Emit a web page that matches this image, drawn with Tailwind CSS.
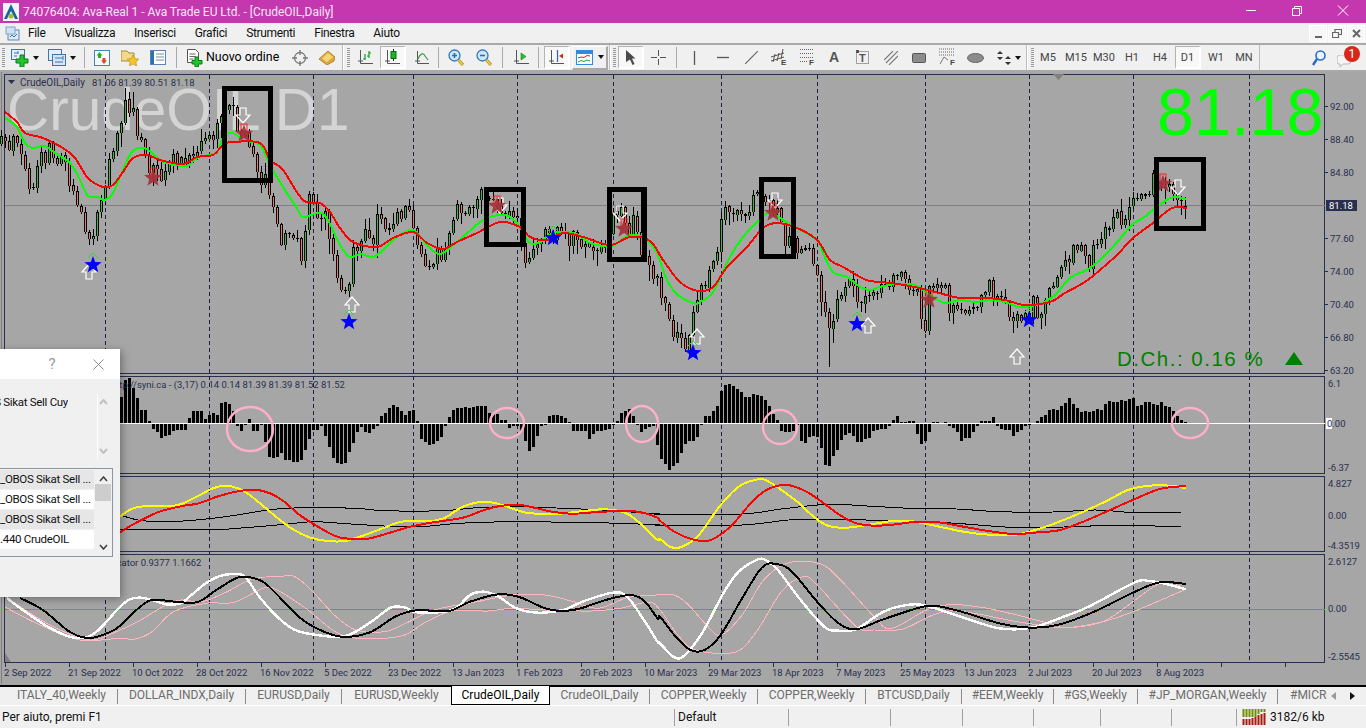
<!DOCTYPE html>
<html lang="it">
<head>
<meta charset="utf-8">
<title>CrudeOIL,Daily</title>
<script src="https://cdn.jsdelivr.net/npm/@tailwindcss/browser@4"></script>
</head>
<body class="w-[1366px] h-[728px] overflow-hidden relative bg-[#f0f0f0] text-[12px] text-black [font-family:Roboto,sans-serif]">
<!-- title bar -->
<div class="h-[23px] bg-[#c437ae] flex items-center text-white">
  <svg class="ml-[3px] shrink-0" width="16" height="18" viewBox="0 0 16 18"><rect width="16" height="18" fill="#eef4f8"/><path d="M8 1L15 16H1z" fill="#1f5f9c"/><path d="M8 8l4 8H4z" fill="#fff"/><circle cx="8" cy="13" r="2.6" fill="#8fc43c"/></svg>
  <span class="ml-[4px] text-[12px] tracking-[-0.03px] text-[#f8e6f4]">74076404: Ava-Real 1 - Ava Trade EU Ltd. - [CrudeOIL,Daily]</span>
  <div class="ml-auto flex items-center">
    <svg width="46" height="23" viewBox="0 0 46 23"><path d="M18 10.5h10" stroke="#fff"/></svg>
    <svg width="46" height="23" viewBox="0 0 46 23"><path d="M18.5 8.5h7v7h-7zM20.5 8.5v-2h7v7h-2" fill="none" stroke="#fff"/></svg>
    <svg width="46" height="23" viewBox="0 0 46 23"><path d="M18 5.5l10 10M28 5.5l-10 10" stroke="#fff"/></svg>
  </div>
</div>
<!-- menu bar -->
<div class="h-[20px] flex items-center relative text-[12px] tracking-[-0.35px] text-[#111]">
  <svg class="ml-[5px] shrink-0" width="15" height="15" viewBox="0 0 15 15"><rect x="3" y="4" width="11" height="10" fill="#dfeaf6" stroke="#5b86b8"/><rect x="1" y="1" width="9" height="7" fill="#cfe0f2" stroke="#7fa3cc"/><path d="M5 11l2-2 2 2 3-3" fill="none" stroke="#3a6ea8"/></svg>
  <div class="ml-[8px] flex gap-[19px]">
    <span>File</span><span>Visualizza</span><span>Inserisci</span><span>Grafici</span><span>Strumenti</span><span>Finestra</span><span>Aiuto</span>
  </div>
  <div class="ml-auto mr-[1px] flex gap-[1px]">
    <div class="w-[18px] h-[17px] bg-[#f7f7f7] border border-white flex items-end justify-center pb-[3px]"><div class="w-[7px] h-[2px] bg-[#666]"></div></div>
    <div class="w-[18px] h-[17px] bg-[#f7f7f7] border border-white flex items-center justify-center"><svg width="10" height="9" viewBox="0 0 10 9"><path d="M.5 3.5h6v5h-6zM3 3V.5h6.5v5H7" fill="none" stroke="#666" stroke-width="1.2"/></svg></div>
    <div class="w-[18px] h-[17px] bg-[#f7f7f7] border border-white flex items-center justify-center"><svg width="9" height="9" viewBox="0 0 9 9"><path d="M1 1l7 7M8 1l-7 7" stroke="#666" stroke-width="2"/></svg></div>
  </div>
</div>
<!-- toolbar -->
<div class="h-[29px] border-y-2 border-[#a9a9a9] flex items-center">
  <div class="ml-[2px] w-[3px] h-[20px] shrink-0 bg-[repeating-linear-gradient(#999_0_1px,transparent_1px_2px)]"></div>
  <svg class="ml-[6px] shrink-0" width="18" height="18" viewBox="0 0 18 18"><rect x=".5" y=".5" width="13" height="10" fill="#e6eff9" stroke="#3f74ae"/><path d="M3 4h4M3 7h3M7 2v3" stroke="#3f74ae"/><path d="M9 6h4v4h4v4h-4v4H9v-4H5v-4h4z" fill="#24c430" stroke="#0a7a14"/></svg>
  <svg class="ml-[4px] shrink-0" width="6" height="4" viewBox="0 0 6 4"><path d="M0 0h6L3 4z" fill="#111"/></svg>
  <svg class="ml-[9px] shrink-0" width="18" height="18" viewBox="0 0 18 18"><rect x=".5" y=".5" width="13" height="11" fill="#e6eff9" stroke="#3f74ae"/><rect x="4.5" y="5.5" width="13" height="11" fill="#d5e5f6" stroke="#3f74ae"/><path d="M7 9h8M7 13h8M15 7v4" stroke="#3f74ae"/></svg>
  <svg class="ml-[4px] shrink-0" width="6" height="4" viewBox="0 0 6 4"><path d="M0 0h6L3 4z" fill="#111"/></svg>
  <div class="ml-[8px] w-px h-[21px] shrink-0 bg-[#a9a9a9]"></div>
  <svg class="ml-[9px] shrink-0" width="16" height="16" viewBox="0 0 16 16"><rect x=".5" y=".5" width="15" height="15" fill="#f6f9fd" stroke="#4d7fb5"/><path d="M5.500 2l3 3.500H7V8H4V5.500H2.500z" fill="#1fb52b"/><path d="M10 14l-3-3.500h1.500V8h3v2.500H13z" fill="#e0442a"/></svg>
  <svg class="ml-[11px] shrink-0" width="18" height="16" viewBox="0 0 18 16"><path d="M0 1h6l2 2h5v8H0z" fill="#f2d98a" stroke="#a08a40"/><path d="M12 5l1.800 3.600 4 .5-2.900 2.800.7 4L12 14l-3.600 1.900.7-4-2.900-2.800 4-.5z" fill="#f3c628" stroke="#b08a1a" stroke-width=".6"/></svg>
  <svg class="ml-[11px] shrink-0" width="16" height="15" viewBox="0 0 16 15"><rect x=".5" y=".5" width="15" height="14" fill="#fff" stroke="#5584b8"/><rect x="1" y="1" width="3" height="13" fill="#2f6fb0"/><path d="M6 4h8M6 7h8M6 10h8" stroke="#6f8aa8"/></svg>
  <div class="ml-[10px] w-px h-[21px] shrink-0 bg-[#a9a9a9]"></div>
  <svg class="ml-[10px] shrink-0" width="17" height="18" viewBox="0 0 17 18"><path d="M.5.500h8l3 3v10H.5z" fill="#fff" stroke="#555"/><path d="M2.500 5h6M2.500 7.500h6M2.500 10h4" stroke="#666"/><path d="M8 8h3.500v3.500H15V15h-3.500v3H8v-3H5v-3.500h3z" fill="#24c430" stroke="#0a7a14"/></svg>
  <span class="ml-[2px] w-[73px] shrink-0 text-[12.4px] whitespace-nowrap">Nuovo ordine</span>
  <svg class="ml-[13px] shrink-0" width="16" height="16" viewBox="0 0 16 16"><circle cx="8" cy="8" r="5.500" fill="none" stroke="#777" stroke-width="1.300"/><path d="M8 0v5M8 11v5M0 8h5M11 8h5" stroke="#777" stroke-width="1.300"/></svg>
  <svg class="ml-[11px] shrink-0" width="16" height="14" viewBox="0 0 16 14"><path d="M0 8l9-8 7 6-1 4-7 4z" fill="#e0a63c" stroke="#9a6c18" stroke-width=".7"/><path d="M3 7.500l6-5.500 5 4-6 5z" fill="#f5d676"/></svg>
  <div class="ml-[7px] w-[2px] h-[25px] shrink-0 bg-[#bdbdbd] border-r border-white"></div>
  <div class="ml-[3px] w-[3px] h-[20px] shrink-0 bg-[repeating-linear-gradient(#999_0_1px,transparent_1px_2px)]"></div>
  <svg class="ml-[8px] shrink-0" width="15" height="15" viewBox="0 0 15 15"><path d="M2.500 0v13.500H15M0 11h5" fill="none" stroke="#555"/><path d="M7 10V4M5 9h2M11 8V1M11 3h2M11 6H9" stroke="#0f9a1c" stroke-width="1.200" fill="none"/></svg>
  <div class="ml-[7px] w-[26px] h-[23px] shrink-0 bg-[#f8f8f8] border border-[#b4b4b4] border-r-2 border-b-2 border-r-white border-b-white flex items-center justify-center"><svg width="15" height="16" viewBox="0 0 15 16"><path d="M2.500 1v13.500H15M0 12h5" fill="none" stroke="#555"/><path d="M8.500 0v12" stroke="#222"/><rect x="6" y="2.500" width="5" height="7" fill="#1fb52b" stroke="#0a6a14"/></svg></div>
  <svg class="ml-[9px] shrink-0" width="14" height="15" viewBox="0 0 14 15"><path d="M2.500 1v12.500H14M0 11h5" fill="none" stroke="#555"/><path d="M3 9c2-5 5-7 7-3l3 4" fill="none" stroke="#3f9a45" stroke-width="1.200"/></svg>
  <div class="ml-[9px] w-px h-[21px] shrink-0 bg-[#a9a9a9]"></div>
  <svg class="ml-[9px] shrink-0" width="16" height="17" viewBox="0 0 16 17"><circle cx="6.500" cy="6.500" r="5.500" fill="#cfe6fa" stroke="#2f78c0" stroke-width="1.300"/><path d="M4 6.500h5M6.500 4v5" stroke="#2f6fb0" stroke-width="1.600"/><path d="M10.500 11l4.500 5" stroke="#b08a1a" stroke-width="3"/><path d="M10.500 11l4.500 5" stroke="#f3d14a" stroke-width="1.500"/></svg>
  <svg class="ml-[12px] shrink-0" width="16" height="17" viewBox="0 0 16 17"><circle cx="6.500" cy="6.500" r="5.500" fill="#cfe6fa" stroke="#2f78c0" stroke-width="1.300"/><path d="M4 6.500h5" stroke="#2f6fb0" stroke-width="1.600"/><path d="M10.500 11l4.500 5" stroke="#b08a1a" stroke-width="3"/><path d="M10.500 11l4.500 5" stroke="#f3d14a" stroke-width="1.500"/></svg>
  <div class="ml-[10px] w-px h-[21px] shrink-0 bg-[#a9a9a9]"></div>
  <svg class="ml-[11px] shrink-0" width="15" height="15" viewBox="0 0 15 15"><path d="M2.500 0v13.500H15M0 11h5" fill="none" stroke="#555"/><path d="M7 3l5 3.500L7 10z" fill="#28c232" stroke="#0a7a14" stroke-width=".6"/></svg>
  <div class="ml-[9px] w-px h-[21px] shrink-0 bg-[#a9a9a9]"></div>
  <div class="ml-[5px] w-[26px] h-[23px] shrink-0 bg-[#f8f8f8] border border-[#b4b4b4] border-r-2 border-b-2 border-r-white border-b-white flex items-center justify-center"><svg width="15" height="16" viewBox="0 0 15 16"><path d="M2.500 1v13.500H15M0 12h5" fill="none" stroke="#555"/><path d="M8.500 1v12" stroke="#2f6fb0" stroke-width="1.300"/><path d="M10 7l4-2.500v5z" fill="#c03018"/></svg></div>
  <div class="ml-[2px] w-[36px] h-[24px] shrink-0 border border-white border-r-[#a9a9a9] border-b-[#a9a9a9] border-r-2 border-b-2 flex items-center pl-[3px]"><svg width="17" height="15" viewBox="0 0 17 15"><rect x=".5" y=".5" width="16" height="14" fill="#fff" stroke="#2f8ae0"/><rect x="1" y="1" width="15" height="3" fill="#2f8ae0"/><path d="M2 8l3-1 3 .5 3-2 3 .5" fill="none" stroke="#c03018"/><path d="M2 12l3-1.500 3 1 3-1.500 3 1" fill="none" stroke="#1fa52b"/></svg><svg class="ml-[5px]" width="6" height="4" viewBox="0 0 6 4"><path d="M0 0h6L3 4z" fill="#111"/></svg></div>
  <div class="ml-px w-[2px] h-[25px] shrink-0 bg-[#bdbdbd] border-r border-white"></div>
  <div class="ml-[2px] w-[3px] h-[20px] shrink-0 bg-[repeating-linear-gradient(#999_0_1px,transparent_1px_2px)]"></div>
  <div class="ml-[2px] w-[26px] h-[23px] shrink-0 bg-[#f8f8f8] border border-[#b4b4b4] border-r-2 border-b-2 border-r-white border-b-white flex items-center justify-center"><svg width="10" height="15" viewBox="0 0 10 15"><path d="M0 0l9.500 8.500H6l2.500 5.500-2 1-2.500-5.500L0 12z" fill="#4a4a4a"/></svg></div>
  <svg class="ml-[7px] shrink-0" width="15" height="15" viewBox="0 0 15 15"><path d="M7.500 0v6M7.500 9v6M0 7.500h6M9 7.500h6" stroke="#555"/></svg>
  <div class="ml-[10px] w-px h-[21px] shrink-0 bg-[#a9a9a9]"></div>
  <svg class="ml-[12px] shrink-0" width="10" height="14" viewBox="0 0 10 14"><path d="M5.500 0v14" stroke="#555" stroke-width="1.300"/></svg>
  <svg class="ml-[18px] shrink-0" width="12" height="3" viewBox="0 0 12 3"><path d="M0 1.500h12" stroke="#555" stroke-width="1.300"/></svg>
  <svg class="ml-[16px] shrink-0" width="13" height="13" viewBox="0 0 13 13"><path d="M0 13L13 0" stroke="#666" stroke-width="1.200"/></svg>
  <svg class="ml-[13px] shrink-0" width="16" height="20" viewBox="0 0 16 20"><path d="M0 9l13-4M0 13l13-4M2 14l2-8M6 13l2-8M10 11l2-10" stroke="#555" fill="none"/><text x="10" y="17" font-size="8" font-weight="700" fill="#444" font-family="Liberation Sans">E</text></svg>
  <svg class="ml-[13px] shrink-0" width="14" height="20" viewBox="0 0 14 20"><path d="M0 1.500h13M0 5.500h13M0 9.500h13M0 13.500h8" stroke="#666" stroke-dasharray="1 1" fill="none"/><text x="9" y="17" font-size="8" font-weight="700" fill="#444" font-family="Liberation Sans">F</text></svg>
  <span class="ml-[14px] w-[12px] shrink-0 text-center text-[14px] font-bold text-[#555] [font-family:'Liberation_Sans',sans-serif]">A</span>
  <svg class="ml-[16px] shrink-0" width="13" height="16" viewBox="0 0 13 16"><rect x=".5" y="1.500" width="12" height="12" fill="none" stroke="#555" stroke-dasharray="1 1"/><rect width="3" height="3" fill="#555"/><text x="3" y="12" font-size="11" font-weight="700" fill="#555" font-family="Liberation Sans">T</text></svg>
  <svg class="ml-[15px] shrink-0" width="14" height="14" viewBox="0 0 14 14"><path d="M0 9l9-9M2 12L14 0M5 14L14 5" stroke="#777" stroke-width="1.100"/></svg>
  <svg class="ml-[14px] shrink-0" width="14" height="10" viewBox="0 0 14 10"><rect x=".5" y=".5" width="13" height="9" rx="1" fill="#8c8c8c" stroke="#555"/></svg>
  <svg class="ml-[13px] shrink-0" width="16" height="20" viewBox="0 0 16 20"><path d="M0 1h16M0 4h16M0 7h16" stroke="#666" stroke-dasharray="1 1"/><path d="M1 16l4-7 4 3" fill="none" stroke="#777"/><text x="11" y="17" font-size="8" font-weight="700" fill="#444" font-family="Liberation Sans">F</text></svg>
  <svg class="ml-[12px] shrink-0" width="17" height="10" viewBox="0 0 17 10"><ellipse cx="8.500" cy="5" rx="8" ry="4.500" fill="#8c8c8c" stroke="#666"/></svg>
  <svg class="ml-[12px] shrink-0" width="16" height="14" viewBox="0 0 16 14"><path d="M4 0l3 3H1zM1 6h6L4 9zM3 9l6-5M12 14l-3-3h6zM15 8H9l3-3z" fill="#333"/></svg>
  <svg class="ml-[3px] shrink-0" width="6" height="4" viewBox="0 0 6 4"><path d="M0 0h6L3 4z" fill="#111"/></svg>
  <div class="ml-[5px] w-[2px] h-[25px] shrink-0 bg-[#bdbdbd] border-r border-white"></div>
  <div class="ml-[3px] w-[3px] h-[20px] shrink-0 bg-[repeating-linear-gradient(#999_0_1px,transparent_1px_2px)]"></div>
  <div class="flex text-[11px] text-[#444] text-center leading-[23px]">
    <span class="w-[28px]">M5</span><span class="w-[28px]">M15</span><span class="w-[28px]">M30</span><span class="w-[28px]">H1</span><span class="w-[28px]">H4</span>
    <span class="w-[26px] mx-px h-[23px] bg-[#f8f8f8] border border-[#b4b4b4] border-r-2 border-b-2 border-r-white border-b-white leading-[21px]">D1</span>
    <span class="w-[28px]">W1</span><span class="w-[28px]">MN</span>
  </div>
  <div class="ml-px w-px h-[25px] shrink-0 bg-[#bdbdbd]"></div>
  <svg class="ml-[52px] shrink-0" width="14" height="16" viewBox="0 0 14 16"><circle cx="8.500" cy="5.500" r="4.500" fill="#eaf3fc" stroke="#2a6cc4" stroke-width="1.600"/><path d="M5 9l-4 6" stroke="#2a6cc4" stroke-width="2.400"/></svg>
  <div class="ml-[11px] w-[24px] h-[24px] shrink-0 relative">
    <svg class="absolute left-0 top-[9px]" width="14" height="13" viewBox="0 0 14 13"><path d="M2 0h9a3 3 0 0 1 3 3v3a3 3 0 0 1-3 3H6l-3 3V9H2a2 2 0 0 1-2-2V3a3 3 0 0 1 2-3z" fill="#f4f4f4" stroke="#b8b8b8"/></svg>
    <div class="absolute left-[7px] top-0 w-[16px] h-[16px] rounded-full bg-[#d9261a] text-white text-[13px] leading-[16px] text-center">1</div>
  </div>
</div>
<!-- chart -->
<div class="h-[613px] bg-[#a6a6a6] relative overflow-hidden">
  <svg id="chart" class="absolute left-0 top-0" width="1366" height="613" viewBox="0 72 1366 613" font-family="Roboto, sans-serif" font-size="9.500" fill="#2a2f4f"></svg>
</div>
<!-- tabs -->
<div class="h-[20px] bg-[#f0f0f0] border-t-2 border-black flex items-center text-[12px] text-[#6d6d6d] leading-none pl-[6px]">
  <div class="w-[112px] h-[15px] text-center border-r border-[#8c8c8c]">ITALY_40,Weekly</div>
  <div class="w-[128px] h-[15px] text-center border-r border-[#8c8c8c]">DOLLAR_INDX,Daily</div>
  <div class="w-[96px] h-[15px] text-center border-r border-[#8c8c8c]">EURUSD,Daily</div>
  <div class="w-[109px] h-[15px] text-center">EURUSD,Weekly</div>
  <div class="w-[99px] h-[19px] -mt-[1px] bg-white border-x border-b border-black text-black text-center leading-[18px]">CrudeOIL,Daily</div>
  <div class="w-[100px] h-[15px] text-center border-r border-[#8c8c8c]">CrudeOIL,Daily</div>
  <div class="w-[108px] h-[15px] text-center border-r border-[#8c8c8c]">COPPER,Weekly</div>
  <div class="w-[108px] h-[15px] text-center border-r border-[#8c8c8c]">COPPER,Weekly</div>
  <div class="w-[96px] h-[15px] text-center border-r border-[#8c8c8c]">BTCUSD,Daily</div>
  <div class="w-[92px] h-[15px] text-center border-r border-[#8c8c8c]">#EEM,Weekly</div>
  <div class="w-[84px] h-[15px] text-center border-r border-[#8c8c8c]">#GS,Weekly</div>
  <div class="w-[140px] h-[15px] text-center border-r border-[#8c8c8c]">#JP_MORGAN,Weekly</div>
  <div class="w-[49px] h-[15px] pl-[12px] overflow-hidden whitespace-nowrap">#MICROSOFT,Weekly</div>
  <svg class="ml-[4px]" width="5" height="8" viewBox="0 0 5 8"><path d="M5 0v8L0 4z" fill="#9a9a9a"/></svg>
  <svg class="ml-[14px]" width="5" height="8" viewBox="0 0 5 8"><path d="M0 0v8l5-4z" fill="#111"/></svg>
</div>
<!-- status bar -->
<div class="h-[23px] flex items-center text-[12px] text-[#111] border-t border-white">
  <span class="ml-[2px] w-[672px]">Per aiuto, premi F1</span>
  <div class="w-[114px] h-[17px] border-l border-[#a0a0a0] pl-[3px] leading-[17px]">Default</div>
  <div class="w-[102px] h-[17px] border-l border-[#a0a0a0]"></div>
  <div class="w-[72px] h-[17px] border-l border-[#a0a0a0]"></div>
  <div class="w-[71px] h-[17px] border-l border-[#a0a0a0]"></div>
  <div class="w-[67px] h-[17px] border-l border-[#a0a0a0]"></div>
  <div class="w-[71px] h-[17px] border-l border-[#a0a0a0]"></div>
  <div class="w-[65px] h-[17px] border-l border-[#a0a0a0]"></div>
  <div class="h-[17px] border-l border-[#a0a0a0] pl-[5px] flex items-center">
    <svg width="24" height="17" viewBox="0 0 24 17"><path d="M1.500 0v8M4.500 0v8M7.500 0v8M10.500 0v8M13.500 0v8M16.500 0v5M19.500 0v3M22.500 0v3" stroke="#6f8f00" stroke-width="2"/><path d="M1.500 16v-6M4.500 16v-6M7.500 16v-6M10.500 16v-7M13.500 16v-8M16.500 16v-10M19.500 16v-11M22.500 16v-12" stroke="#a81c10" stroke-width="2"/></svg>
    <span class="ml-[4px]">3182/6 kb</span>
  </div>
</div>
<!-- dialog -->
<div class="absolute left-0 top-[349px] w-[120px] h-[248px] bg-[#f0f0f0] shadow-[2px_2px_8px_rgba(0,0,0,0.35)] overflow-hidden">
  <div class="h-[30px] bg-white flex items-center text-[#9a9a9a]">
    <span class="ml-[48px] w-[8px] text-[15px] text-center">?</span>
    <svg class="ml-[37px]" width="11" height="11" viewBox="0 0 11 11"><path d="M.5.500l10 10M10.500.500l-10 10" stroke="#8a8a8a"/></svg>
  </div>
  <div class="h-[89px] pt-[16px] flex items-start">
    <div class="w-[97px] flex"><div class="w-[68px] flex justify-end overflow-hidden whitespace-nowrap text-[11.5px] tracking-[-0.3px] leading-[15px] text-[#111]"><span class="shrink-0">OBOS Sikat Sell Cuy</span></div></div>
    <div class="w-[12px] h-[65px] border-l border-white flex flex-col justify-between items-center py-[5px] -mt-[1px]">
      <svg width="9" height="6" viewBox="0 0 9 6"><path d="M1 5l3.500-4L8 5" fill="none" stroke="#c0c0c0" stroke-width="2"/></svg>
      <svg width="9" height="6" viewBox="0 0 9 6"><path d="M1 1l3.500 4L8 1" fill="none" stroke="#c0c0c0" stroke-width="2"/></svg>
    </div>
  </div>
  <div class="w-[113px] h-[89px] border border-[#8a95a5] border-l-0 flex text-[11.5px] tracking-[-0.3px] text-[#111]">
    <div class="w-[94px] pt-px">
      <div class="h-[19px] mb-px bg-[#e6e6e6] leading-[19px] whitespace-nowrap overflow-hidden">_OBOS Sikat Sell ...</div>
      <div class="h-[19px] mb-px bg-white leading-[19px] whitespace-nowrap overflow-hidden">_OBOS Sikat Sell ...</div>
      <div class="h-[19px] mb-px bg-[#e6e6e6] leading-[19px] whitespace-nowrap overflow-hidden">_OBOS Sikat Sell ...</div>
      <div class="h-[19px] bg-white leading-[19px] whitespace-nowrap overflow-hidden">.440 CrudeOIL</div>
    </div>
    <div class="w-[18px] bg-[#f0f0f0] flex flex-col items-center pt-[7px] pb-[6px]">
      <svg width="9" height="6" viewBox="0 0 9 6"><path d="M1 5l3.500-4L8 5" fill="none" stroke="#444" stroke-width="1.600"/></svg>
      <div class="w-[16px] h-[17px] mt-[2px] bg-[#cdcdcd]"></div>
      <svg class="mt-auto" width="9" height="6" viewBox="0 0 9 6"><path d="M1 1l3.500 4L8 1" fill="none" stroke="#444" stroke-width="1.600"/></svg>
    </div>
  </div>
</div>
<script>
(function(){
var NS='http://www.w3.org/2000/svg',svg=document.getElementById('chart');
function el(n,a,t,p){var e=document.createElementNS(NS,n);for(var k in a)e.setAttribute(k,a[k]);if(t!=null)e.textContent=t;(p||svg).appendChild(e);return e;}
function smooth(p){var d='M'+p[0][0]+' '+p[0][1];for(var i=0;i<p.length-1;i++){var a=p[i-1]||p[i],b=p[i],c=p[i+1],e=p[i+2]||c;
 d+='C'+(b[0]+(c[0]-a[0])/6).toFixed(1)+' '+(b[1]+(c[1]-a[1])/6).toFixed(1)+' '+(c[0]-(e[0]-b[0])/6).toFixed(1)+' '+(c[1]-(e[1]-b[1])/6).toFixed(1)+' '+c[0]+' '+c[1];}return d;}
function pairs(a){var r=[];for(var i=0;i<a.length;i+=2)r.push([a[i],a[i+1]]);return r;}
function zoom(a,b,pre){var r=pre?pre.slice():[];pairs(a).forEach(function(p){if(p[0]<1512)r.push([+(120+p[0]/2.8).toFixed(1),+(375+p[1]/3).toFixed(1)]);});
 pairs(b).forEach(function(p){r.push([+(660+p[0]/2.8).toFixed(1),+(375+p[1]/3).toFixed(1)]);});return r;}
function line(pts,c,w){el('path',{d:smooth(pts),fill:'none',stroke:c,'stroke-width':w,'shape-rendering':'crispEdges'});}
var navy='#2a2f4f';
el('text',{x:7,y:130,'font-size':58.5,'font-family':'Liberation Sans, sans-serif',fill:'#d4d4d4'},'CrudeOIL D1');
[[74,373],[376,473],[476,551],[554,662]].forEach(function(r){el('rect',{x:4.5,y:r[0]+.5,width:1320,height:r[1]-r[0],fill:'none',stroke:navy,'shape-rendering':'crispEdges'});});
el('path',{d:'M1.500 72V684',stroke:'#808080'});
[105,209,313,413,517,613,721,817,925,1029,1133,1249].forEach(function(x){el('path',{d:'M'+(x+.5)+' 75V662',stroke:'#1c2040','stroke-dasharray':'4 3','shape-rendering':'crispEdges'});});
el('path',{d:'M5 205.500H1325',stroke:'#808080'});
el('path',{d:'M5 609.500H1325',stroke:'#b656d8'});
var cen=pairs([5,140,15,130,25,170,30,195,40,150,55,165,75,190,85,235,92,240,100,200,110,150,125,110,133,105,140,130,150,170,165,175,180,165,195,150,215,130,225,105,235,125,250,155,265,175,275,225,290,235,300,250,310,205,325,215,335,270,345,295,355,255,370,235,385,220,395,210,410,215,425,265,440,255,460,210,480,195,495,200,510,215,525,255,540,235,552,225,570,235,585,245,600,245,615,215,630,225,640,245,655,280,665,320,680,340,690,325,705,280,715,265,719,262,722,208,745,210,755,190,770,195,785,235,800,250,815,260,827,330,835,310,850,285,865,300,880,285,900,275,915,295,925,315,935,275,950,300,965,320,980,295,1000,300,1015,320,1030,310,1045,295,1060,270,1075,250,1090,262,1110,225,1130,205,1150,190,1165,180,1178,195,1185,207]);
function at(x){for(var i=0;i<cen.length-1;i++){if(x<=cen[i+1][0]){var a=cen[i],b=cen[i+1];return a[1]+(b[1]-a[1])*(x-a[0])/(b[0]-a[0]);}}return cen[cen.length-1][1];}
var s=12345;function rnd(){s=(s*1103515245+12345)&2147483647;return (s>>8&65535)/65535;}
var prev=at(1),cg=el('g',{'shape-rendering':'crispEdges'});
for(var x=1;x<=1185;x+=4){
 var amp=rnd()<.35?17:8,cl=at(x)+(rnd()-.5)*amp*2,op=prev+(rnd()-.5)*1.5;
 if(Math.abs(cl-op)<1)cl=op+1;
 if(x==1185){op=206;cl=207;} 
 var top=Math.min(cl,op),bot=Math.max(cl,op),hi=top-1-rnd()*rnd()*12,lo=bot+1+rnd()*rnd()*15;
 if(x==133)hi=92; if(x==829)lo=367; if(x==641)hi=188;
 el('path',{d:'M'+(x+.5)+' '+hi.toFixed(0)+'V'+lo.toFixed(0),stroke:'#000'},null,cg);
 el('rect',{x:x-1,y:top.toFixed(0),width:3,height:Math.max(1,bot-top).toFixed(0),fill:'#000'},null,cg);
 if(bot-top>2)el('rect',{x:x,y:(Math.round(top)+1),width:1,height:Math.round(bot-top)-1,fill:cl<op?'#14d41e':'#f0785a'},null,cg);
 prev=cl;
}
line(pairs([5,118,17,127,25,143,33,148,45,146,55,153,70,163,80,180,88,196,98,197,105,200,113,193,123,170,132,152,145,148,157,158,167,163,187,166,197,158,217,152,223,137,233,133,243,140,260,145,270,165,283,187,297,208,303,217,320,213,328,220,340,245,350,257,360,254,373,257,383,250,397,237,413,230,427,245,440,254,457,242,483,220,500,215,510,217,520,227,530,243,540,242,553,233,573,233,590,243,603,246,613,246,630,235,647,240,657,253,667,280,678,295,693,303,700,302,713,292,730,257,743,237,757,222,770,212,783,220,797,228,817,240,823,253,833,272,847,277,860,287,870,290,880,287,895,284,915,285,930,295,945,303,960,300,975,302,990,300,1005,302,1020,307,1040,304,1055,295,1070,278,1090,268,1110,250,1132,225,1143,218,1153,210,1170,198,1182,198,1186,199]),'#00ff00',2);
line(pairs([5,112,17,122,25,133,43,138,63,148,75,158,88,178,103,187,113,185,123,172,133,158,147,155,160,160,183,164,197,157,213,155,223,145,233,142,260,143,270,160,283,170,303,200,320,203,330,212,340,228,353,242,377,247,393,238,413,232,427,243,443,249,457,242,477,233,500,222,520,227,530,237,547,240,563,233,583,237,610,245,630,237,650,241,663,260,680,282,698,291,713,287,727,267,747,247,763,228,777,223,797,228,817,240,830,260,843,267,860,277,870,281,890,283,915,287,935,292,960,298,985,298,1005,300,1025,305,1050,302,1065,293,1085,282,1100,270,1117,255,1133,238,1153,223,1172,208,1187,208]),'#ff0000',2);
function star(cx,cy,r,c,o){var p=[];for(var i=0;i<10;i++){var a=-Math.PI/2+i*Math.PI/5,q=i%2?r*.42:r;p.push((cx+q*Math.cos(a)).toFixed(1)+','+(cy+q*Math.sin(a)).toFixed(1));}el('polygon',{points:p.join(' '),fill:c,'fill-opacity':o||1});}
function arrow(cx,cy,up,st){var k=up?-1:1,pts=[[-3,-7],[3,-7],[3,0],[7,0],[0,8],[-7,0],[-3,0]];el('polygon',{points:pts.map(function(p){return (cx+p[0])+','+(cy+k*p[1]);}).join(' '),fill:'none',stroke:st||'#fff','stroke-width':1.2});}
[[89,272],[352,305],[697,337],[868,326],[1017,357]].forEach(function(a){arrow(a[0],a[1],true);});
[[243,115],[500,205],[620,213],[775,200],[1178,187]].forEach(function(a){arrow(a[0],a[1],false);});
[[93,265],[349,322],[553,238],[693,353],[857,324],[1029,320]].forEach(function(a){el('path',{d:'M'+(a[0]-5)+' '+(a[1]-7)+'l5-5 5 5',fill:'none',stroke:'#20e020'});star(a[0],a[1],9,'#0000ff');});
[[153,178],[244,134],[497,206],[624,229],[773,213],[929,300],[1163,184]].forEach(function(a){el('rect',{x:a[0]-3,y:a[1]-10,width:6,height:9,fill:'none',stroke:'#ff2020'});star(a[0],a[1],9.5,'#a5303a',.92);});
[[222,86,273,183],[484,187,526,247],[607,187,647,262],[759,177,796,259],[1154,157,1206,231]].forEach(function(r){el('rect',{x:r[0]+2.5,y:r[1]+2.5,width:r[2]-r[0]-5,height:r[3]-r[1]-5,fill:'none',stroke:'#000','stroke-width':5,'shape-rendering':'crispEdges'});});
var h=[26,43,45,35,25,13,13,2,-5,-8,-14,-12,-11,-7,-6,-6,-6,5,12,12,12,4,8,10,8,20,21,19,12,-2,-7,-1,4,-7,-7,-1,-18,-33,-34,-33,-29,-36,-36,-38,-38,-36,-26,-15,-6,-6,-2,-12,-23,-34,-39,-40,-39,-28,-19,-8,-3,-8,-9,-5,-2,7,10,15,18,16,12,8,12,13,2,-15,-18,-21,-20,-17,-13,-2,6,13,15,15,16,15,16,17,17,17,10,9,9,3,3,-4,-2,-2,-7,-17,-27,-23,-12,-2,-1,7,8,8,7,5,1,-7,-7,-7,-7,-15,-10,-7,-7,-6,-5,-1,2,10,12,14,7,-1,-8,-5,-3,-2,-21,-35,-40,-46,-42,-39,-29,-20,-17,-17,-13,-1,7,7,12,17,32,38,39,37,34,31,26,26,29,28,27,23,17,9,3,-7,-8,-8,-7,-1,-17,-19,-13,-12,-13,-24,-41,-42,-32,-26,-16,-11,-9,-12,-18,-18,-15,-14,-7,-6,-5,-5,-2,3,7,1,1,2,2,-10,-20,-17,-8,1,1,0,1,-2,-4,-8,-17,-14,-14,-8,-2,2,2,2,6,-2,-5,-6,-6,-12,-8,-6,-2,-1,0,2,6,8,13,14,13,17,20,25,19,15,11,12,11,12,14,13,19,22,21,21,23,22,24,25,17,18,21,21,19,18,21,17,16,12,7,3,1];
var hg=el('g',{'shape-rendering':'crispEdges',fill:'#000'});
h.forEach(function(v,i){if(!v)return;var x=121+i*4;el('rect',{x:x-1,y:v>0?423-v:424,width:3,height:Math.abs(v)},null,hg);});
el('path',{d:'M5 423.500H1325',stroke:'#fff'});
[[250,429,23,22],[507,423,17,15],[642,424,16,18],[780,427,17,17],[1190,423,18,15]].forEach(function(c){el('ellipse',{cx:c[0],cy:c[1],rx:c[2],ry:c[3],fill:'none',stroke:'#ffb0c8','stroke-width':2.4});});
line(zoom([0,420,50,435,110,440,190,437,260,430,340,418,430,403,520,398,660,400,740,407,900,407,1000,398,1100,395,1200,398,1350,405,1480,415,1511,416],[0,418,230,417,340,402,470,388,580,393,700,400,830,402,950,410,1100,411,1220,405,1330,413,1458,412]),'#000',1);
line(zoom([0,462,250,464,350,458,470,447,545,440,660,448,820,456,950,445,1100,440,1250,442,1400,445,1511,450],[0,451,230,450,360,435,470,432,600,436,800,443,1000,458,1130,456,1250,452,1458,454]),'#000',1);
line(zoom([0,425,30,403,70,393,150,392,180,383,220,362,260,340,295,332,330,340,360,358,400,392,440,428,480,460,530,487,580,498,630,498,680,482,740,458,780,442,820,437,870,438,910,428,960,395,1020,380,1070,390,1110,405,1150,415,1230,416,1280,410,1350,403,1400,408,1430,422,1470,458,1505,495],[0,492,30,516,60,516,100,490,130,450,170,390,220,335,265,315,295,315,340,345,390,385,430,425,470,452,520,458,580,450,650,438,700,438,760,450,850,470,930,480,990,480,1060,462,1130,435,1190,408,1250,378,1310,345,1370,332,1430,332,1472,340]),'#ffff00',2);
line(zoom([0,472,30,452,70,430,110,410,170,394,220,385,280,362,340,347,380,344,420,355,460,380,500,418,550,452,600,482,630,490,690,492,750,475,810,456,870,443,960,428,1020,405,1070,392,1120,390,1160,398,1210,410,1270,416,1350,410,1430,408,1470,415,1505,428],[0,437,40,470,90,493,135,497,175,475,210,440,250,390,290,350,330,332,360,330,410,350,450,378,500,418,550,445,600,452,660,448,720,440,780,442,850,455,920,468,990,477,1060,472,1120,465,1190,438,1260,405,1330,372,1400,342,1472,333]),'#ff0000',2);
line(zoom([0,765,50,740,120,695,170,675,230,680,300,650,370,612,450,604,490,605,540,650,600,720,660,765,740,770,800,745,880,705,1000,680,1100,660,1190,660,1270,680,1340,700,1420,668,1500,660],[0,660,40,660,80,690,130,750,170,780,230,720,290,615,360,563,450,567,510,620,600,725,650,760,770,695,900,697,1090,745,1140,758,1250,735,1400,625,1470,642],[[10,600],[50,625],[90,640]]),'#ffb6c1',1);
line(zoom([0,790,40,793,90,770,150,710,240,685,320,682,400,640,440,645,520,700,630,783,780,785,850,745,930,708,1030,708,1100,700,1190,705,1320,708,1400,700,1480,682],[0,705,50,780,100,825,210,832,270,770,340,650,400,605,440,630,550,755,600,765,680,762,810,708,1000,740,1130,758,1240,740,1330,708,1472,643],[[5,607],[40,625],[80,640]]),'#ffb6c1',1);
line(zoom([0,695,30,672,60,668,90,675,130,688,170,685,200,660,240,625,280,603,320,597,350,605,390,665,440,725,490,765,550,780,620,785,660,770,710,735,760,697,800,698,830,712,930,705,980,660,1020,650,1060,665,1110,700,1170,713,1240,705,1300,678,1380,653,1420,665,1470,740,1505,800],[0,805,40,847,70,840,120,770,180,650,220,590,270,555,295,555,330,585,390,670,460,755,500,767,550,762,630,708,710,688,770,700,850,728,950,760,1040,758,1130,725,1200,695,1330,622,1370,618,1420,628,1472,643],[[7,598],[20,608],[50,628],[75,638],[95,633]]),'#fff',2.4);
line(zoom([0,752,40,710,80,678,110,675,170,682,220,680,270,645,320,612,350,605,400,620,450,670,500,725,550,760,620,785,700,772,770,725,830,706,920,708,980,680,1060,658,1120,667,1190,700,1240,708,1290,700,1360,675,1430,660,1470,680,1505,730],[0,725,40,780,85,825,125,825,170,780,230,670,285,578,325,567,370,590,440,680,500,745,550,763,620,735,720,700,770,692,850,712,950,745,1040,758,1120,748,1220,708,1330,650,1400,622,1472,627],[[20,598],[43,610],[70,632],[90,638],[110,632]]),'#000',2);
el('path',{d:'M8 80h7l-3.500 4z',fill:'#2a2f4f'});
el('text',{x:20,y:86,'font-size':10},'CrudeOIL,Daily');
el('text',{x:92,y:86,'font-size':9.5},'81.06 81.39 80.51 81.18');
el('text',{x:111,y:388,'font-size':9.5},'http://syni.ca - (3,17) 0.14 0.14 81.39 81.39 81.52 81.52');
el('text',{x:101,y:566,'font-size':9.5},'Indicator 0.9377 1.1662');
el('path',{d:'M1053 74h11l-5.500 6z',fill:'#808080'});
el('path',{d:'M5 653l6 9h-6z',fill:'#808080'});
el('text',{x:1157,y:135,'font-size':66.5,'font-family':'Liberation Sans, sans-serif',fill:'#00ff00'},'81.18');
el('text',{x:1117,y:366,'font-size':20.5,'letter-spacing':'1.5','font-family':'Liberation Sans, sans-serif',fill:'#008000'},'D.Ch.: 0.16 %');
el('path',{d:'M1285 365l9-13 9 13z',fill:'#008000'});
var ax=[[92,'92.00'],[88.4,'88.40'],[84.8,'84.80'],[77.6,'77.60'],[74,'74.00'],[70.4,'70.40'],[66.8,'66.80'],[63.2,'63.20']];
ax.forEach(function(a){var y=Math.round(106+(92-a[0])*9.17);el('path',{d:'M1325 '+(y+.5)+'h3',stroke:navy});el('text',{x:1330,y:y+3.5},a[1]);});
[['6.1',387],['-6.37',471],['4.827',487],['0.00',519],['-4.3519',549],['2.6127',565],['0.00',612],['-2.5545',660]].forEach(function(a){el('text',{x:1328,y:a[1]},a[0]);});
el('rect',{x:1326,y:418,width:6,height:11,fill:'#fff'});
el('text',{x:1327,y:427},'0.00');
el('rect',{x:1326,y:200,width:31,height:11,fill:'#2a2f4f'});
el('text',{x:1329,y:209,fill:'#fff'},'81.18');
var dx=['2 Sep 2022','21 Sep 2022','10 Oct 2022','28 Oct 2022','16 Nov 2022','5 Dec 2022','23 Dec 2022','13 Jan 2023','1 Feb 2023','20 Feb 2023','10 Mar 2023','29 Mar 2023','18 Apr 2023','7 May 2023','25 May 2023','13 Jun 2023','2 Jul 2023','20 Jul 2023','8 Aug 2023'];
dx.forEach(function(t,i){var x=5+i*64;el('path',{d:'M'+(x+.5)+' 662v5',stroke:navy});el('text',{x:x-1,y:676},t);});
for(var i=19;i<21;i++){var x=5+i*64;el('path',{d:'M'+(x+.5)+' 662v5',stroke:navy});}
})();
</script>
</body>
</html>
